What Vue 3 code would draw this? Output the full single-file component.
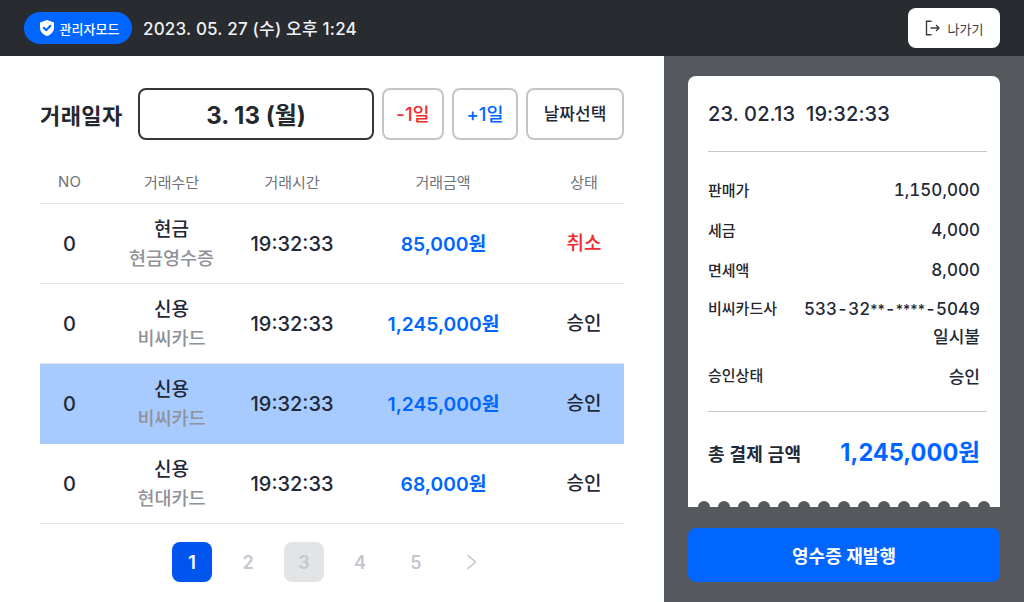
<script setup>
const rows = [
  { no: 0, method: '현금', sub: '현금영수증', time: '19:32:33', amount: '85,000원', state: '취소', cancel: true },
  { no: 0, method: '신용', sub: '비씨카드', time: '19:32:33', amount: '1,245,000원', state: '승인' },
  { no: 0, method: '신용', sub: '비씨카드', time: '19:32:33', amount: '1,245,000원', state: '승인', active: true },
  { no: 0, method: '신용', sub: '현대카드', time: '19:32:33', amount: '68,000원', state: '승인' },
]
const pages = [1, 2, 3, 4, 5]
const dots = Array.from({ length: 15 }, (_, i) => i)
</script>

<template>
  <div class="page">
    <header class="topbar">
      <div class="top-left">
        <span class="badge">
          <svg width="18" height="18" viewBox="0 0 18 18">
            <path d="M9 1 L16 3.4 V8.4 C16 12.6 13.2 15.6 9 17 C4.8 15.6 2 12.6 2 8.4 V3.4 Z" fill="#fff" />
            <path d="M5.8 8.8 L8.2 11.2 L12.4 6.8" fill="none" stroke="#0066ff" stroke-width="2" stroke-linecap="round" stroke-linejoin="round" />
          </svg>
          관리자모드
        </span>
        <span class="now">2023. 05. 27 (수) 오후 1:24</span>
      </div>
      <button class="exit">
        <svg width="16" height="16" viewBox="0 0 16 16" fill="none" stroke="#3a3d42" stroke-width="1.4">
          <path d="M6.5 1.2 H1.5 V14.8 H6.5" />
          <path d="M5.5 8 H14 M11 5 L14 8 L11 11" />
        </svg>
        나가기
      </button>
    </header>

    <div class="body">
      <main class="left">
        <div class="date-row">
          <h2 class="date-label">거래일자</h2>
          <div class="date-box">3. 13 (월)</div>
          <button class="date-btn minus">-1일</button>
          <button class="date-btn plus">+1일</button>
          <button class="date-btn pick">날짜선택</button>
        </div>

        <div class="table">
          <div class="row head">
            <span>NO</span>
            <span>거래수단</span>
            <span>거래시간</span>
            <span>거래금액</span>
            <span>상태</span>
          </div>
          <div v-for="(r, i) in rows" :key="i" class="row item" :class="{ active: r.active }">
            <span class="num">{{ r.no }}</span>
            <span class="method">
              {{ r.method }}
              <small>{{ r.sub }}</small>
            </span>
            <span class="num">{{ r.time }}</span>
            <span class="amount">{{ r.amount }}</span>
            <span :class="{ cancel: r.cancel }">{{ r.state }}</span>
          </div>
        </div>

        <nav class="pager">
          <span v-for="p in pages" :key="p" class="pg" :class="{ on: p === 1, hover: p === 3 }">{{ p }}</span>
          <span class="pg">
            <svg width="14" height="18" viewBox="0 0 14 18" fill="none" stroke="#c4c7cf" stroke-width="1.6">
              <path d="M2.5 2 L10.5 9 L2.5 16" />
            </svg>
          </span>
        </nav>
      </main>

      <aside class="right">
        <section class="receipt">
          <div class="stamp">23. 02.13&nbsp;&nbsp;19:32:33</div>
          <div class="lines">
            <div class="line"><span>판매가</span><b>1,150,000</b></div>
            <div class="line"><span>세금</span><b>4,000</b></div>
            <div class="line"><span>면세액</span><b>8,000</b></div>
            <div class="line card-line">
              <span>비씨카드사</span>
              <b>533-32<em>**</em>-<em>****</em>-5049<br />일시불</b>
            </div>
            <div class="line"><span>승인상태</span><b>승인</b></div>
          </div>
          <div class="total">
            <span>총 결제 금액</span>
            <strong>1,245,000원</strong>
          </div>
          <div class="dots">
            <i v-for="d in dots" :key="d"></i>
          </div>
        </section>
        <button class="reissue">영수증 재발행</button>
      </aside>
    </div>
  </div>
</template>

<style>
html, body {
  margin: 0;
}
</style>

<style scoped>
.page {
  width: 1024px;
  height: 602px;
  display: flex;
  flex-direction: column;
  overflow: hidden;
  font-family: Inter, "Noto Sans CJK KR", sans-serif;
  color: #1f2937;
}

button {
  font-family: inherit;
  cursor: pointer;
}

.topbar {
  height: 56px;
  flex: none;
  box-sizing: border-box;
  padding: 0 24px;
  background: #282b30;
  display: flex;
  justify-content: space-between;
  align-items: center;
}

.top-left {
  display: flex;
  align-items: center;
  gap: 11px;
}

.badge {
  height: 32px;
  width: 108px;
  box-sizing: border-box;
  padding-left: 1px;
  border-radius: 16px;
  background: #0066ff;
  color: #fff;
  font-size: 13px;
  font-weight: 500;
  display: flex;
  align-items: center;
  justify-content: center;
  gap: 4px;
}

.now {
  padding-bottom: 2px;
  color: #f0f1f3;
  font-size: 17px;
  font-weight: 500;
  letter-spacing: 0.2px;
}

.exit {
  width: 92px;
  height: 40px;
  background: #fff;
  border: none;
  border-radius: 8px;
  color: #3a3d42;
  font-size: 13px;
  display: flex;
  align-items: center;
  justify-content: center;
  gap: 7px;
}

.body {
  flex: 1;
  display: flex;
}

.left {
  width: 664px;
  flex: none;
  box-sizing: border-box;
  padding: 32px 40px 0;
  background: #fff;
}

.date-row {
  height: 52px;
  display: flex;
  align-items: center;
  gap: 8px;
}

.date-label {
  margin: 0 0 1px;
  width: 90px;
  font-size: 22px;
  font-weight: 700;
  letter-spacing: 0.4px;
  white-space: nowrap;
  color: #24272c;
}

.date-box {
  width: 236px;
  height: 52px;
  box-sizing: border-box;
  padding-bottom: 1px;
  border: 2px solid #33363b;
  border-radius: 8px;
  display: flex;
  align-items: center;
  justify-content: center;
  font-size: 24px;
  font-weight: 700;
  color: #24272c;
}

.date-btn {
  height: 52px;
  box-sizing: border-box;
  padding: 0 0 3px;
  background: #fff;
  border: 2px solid #c4c5c8;
  border-radius: 8px;
  font-size: 18.5px;
  font-weight: 500;
}

.minus {
  width: 62px;
  color: #f02b2b;
}

.plus {
  width: 66px;
  color: #0066ff;
}

.pick {
  width: 98px;
  font-size: 17px;
  color: #1f2937;
}

.table {
  margin-top: 20px;
}

.row {
  display: grid;
  grid-template-columns: 59px 145px 96px 206px 76px;
  align-items: center;
  text-align: center;
  border-bottom: 1px solid #e5e6e8;
  box-sizing: border-box;
}

.head {
  height: 44px;
  color: #6f7278;
  font-size: 15px;
}

.item {
  height: 80px;
  padding-top: 1px;
  font-size: 19px;
  line-height: 28px;
  font-weight: 500;
  color: #1f2937;
}

.item.active {
  background: #a8cbff;
  border-bottom-color: #a8cbff;
}

.num {
  font-size: 20px;
}

.method small {
  display: block;
  font-size: 18.5px;
  font-weight: 500;
  color: #8f9298;
}

.amount {
  padding-left: 1px;
  font-size: 19.3px;
  color: #0066ff;
  font-weight: 600;
}

.cancel {
  color: #f02b2b;
}

.pager {
  margin-top: 18px;
  padding-left: 132px;
  display: flex;
  gap: 16px;
}

.pg {
  width: 40px;
  height: 40px;
  border-radius: 8px;
  display: flex;
  align-items: center;
  justify-content: center;
  font-size: 18px;
  font-weight: 600;
  color: #c4c7cf;
}

.pg.on {
  background: #0055ee;
  color: #fff;
}

.pg.hover {
  background: #e3e4e6;
}

.right {
  width: 360px;
  flex: none;
  box-sizing: border-box;
  padding: 20px 24px 0;
  background: #55585d;
  display: flex;
  flex-direction: column;
}

.receipt {
  height: 431px;
  min-width: 0;
  box-sizing: border-box;
  padding: 0 13px 0 20px;
  background: #fff;
  border-radius: 8px 8px 0 0;
  display: flex;
  flex-direction: column;
}

.stamp {
  height: 76px;
  flex: none;
  box-sizing: border-box;
  border-bottom: 1px solid #c4c5c8;
  display: flex;
  align-items: center;
  font-size: 20px;
  font-weight: 500;
  letter-spacing: 0.12px;
  color: #1f2937;
}

.lines {
  height: 260px;
  flex: none;
  box-sizing: border-box;
  padding: 18px 7px 0 0;
  border-bottom: 1px solid #c4c5c8;
}

.line {
  min-height: 40px;
  display: flex;
  justify-content: space-between;
  align-items: center;
  font-size: 15px;
  font-weight: 500;
  color: #24272c;
}

.line span {
  padding-bottom: 2px;
}

.line b {
  font-size: 17px;
  font-weight: 500;
  font-variant-numeric: tabular-nums;
  text-align: right;
  color: #1f2937;
}

.line em {
  font-size: 14px;
  font-style: normal;
  font-variant-numeric: normal;
}

.card-line {
  align-items: flex-start;
  box-sizing: border-box;
  height: 65px;
  padding-top: 6px;
  line-height: 26.5px;
}

.total {
  flex: none;
  height: 82px;
  padding-right: 7px;
  display: flex;
  justify-content: space-between;
  align-items: center;
  font-size: 18px;
  font-weight: 600;
  letter-spacing: 0.2px;
  color: #1f2937;
}

.total strong {
  margin-bottom: 4px;
  font-size: 23.6px;
  font-weight: 700;
  letter-spacing: 0;
  color: #0066ff;
}

.dots {
  margin: auto 0 0 -10px;
  width: 292px;
  flex: none;
  display: flex;
  gap: 8px;
}

.dots i {
  display: block;
  flex: none;
  width: 12px;
  height: 6px;
  border-radius: 6px 6px 0 0;
  background: #55585d;
}

.reissue {
  margin-top: 21px;
  height: 54px;
  flex: none;
  background: #0066ff;
  border: none;
  border-radius: 8px;
  color: #fff;
  font-size: 18px;
  font-weight: 600;
}
</style>
